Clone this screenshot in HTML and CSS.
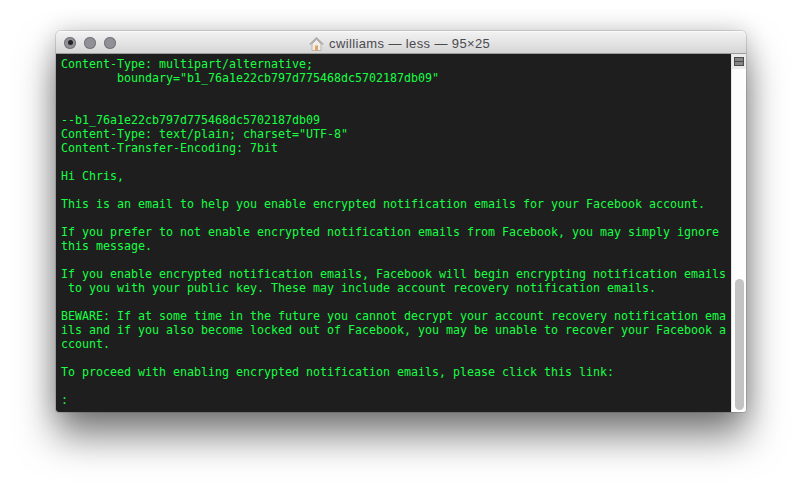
FILE: index.html
```html
<!DOCTYPE html>
<html lang="en">
<head>
<meta charset="utf-8">
<title>cwilliams — less — 95×25</title>
<link rel="stylesheet" href="styles.css">
</head>
<body>
<main class="window">
  <header class="titlebar">
    <div class="lights">
      <span class="light"><span class="dot"></span></span>
      <span class="light"></span>
      <span class="light"></span>
    </div>
    <div class="title">
      <svg class="home" width="15" height="14" viewBox="0 0 15 14">
        <path d="M3 7v6.500h9V7L7.500 2.500z" fill="#f1eeea" stroke="#b9b5b0" stroke-width="1"/>
        <path d="M.8 7.500 7.500 1l6.700 6.500" fill="none" stroke="#a8a5a2" stroke-width="1.300"/>
        <rect x="6" y="8.500" width="3" height="5" fill="#e0a468"/>
      </svg>
      <span>cwilliams — less — 95×25</span>
    </div>
  </header>
  <div class="body">
    <pre class="term">Content-Type: multipart/alternative;
        boundary="b1_76a1e22cb797d775468dc5702187db09"


--b1_76a1e22cb797d775468dc5702187db09
Content-Type: text/plain; charset="UTF-8"
Content-Transfer-Encoding: 7bit

Hi Chris,

This is an email to help you enable encrypted notification emails for your Facebook account.

If you prefer to not enable encrypted notification emails from Facebook, you may simply ignore
this message.

If you enable encrypted notification emails, Facebook will begin encrypting notification emails
 to you with your public key. These may include account recovery notification emails.

BEWARE: If at some time in the future you cannot decrypt your account recovery notification ema
ils and if you also become locked out of Facebook, you may be unable to recover your Facebook a
ccount.

To proceed with enabling encrypted notification emails, please click this link:

:</pre>
    <aside class="scrollbar">
      <div class="split"><span class="split-icon"></span></div>
      <div class="track"><div class="thumb"></div></div>
    </aside>
  </div>
</main>
</body>
</html>
```
FILE: styles.css
```css
html, body {
  margin: 0;
  height: 492px;
  overflow: hidden;
  background: #fff;
}
body {
  padding: 31px 56px 0;
  box-sizing: border-box;
}
.window {
  width: 690px;
  height: 381px;
  display: flex;
  flex-direction: column;
  border-radius: 5px 5px 3px 3px;
  overflow: hidden;
  box-shadow: 0 0 0 1px rgba(0,0,0,.12), 0 24px 38px rgba(0,0,0,.5), 0 0 24px rgba(0,0,0,.18);
}
.titlebar {
  height: 23px;
  flex: none;
  display: flex;
  align-items: center;
  position: relative;
  background: linear-gradient(#f2f2f2, #d6d6d6);
  border-top: 1px solid #fafafa;
  box-sizing: border-box;
  border-bottom: 1px solid #9c9c9c;
}
.lights {
  display: flex;
  gap: 8px;
  padding-left: 8px;
}
.light {
  width: 12px;
  height: 12px;
  border-radius: 50%;
  background: #919096;
  box-shadow: inset 0 0 0 1px #77767b;
  display: flex;
  align-items: center;
  justify-content: center;
}
.dot {
  width: 5px;
  height: 5px;
  border-radius: 50%;
  background: #232325;
}
.title {
  position: absolute;
  left: 253px;
  top: 3px;
  display: flex;
  align-items: center;
  gap: 5px;
  font: 13px/17px "Liberation Sans", sans-serif;
  letter-spacing: .38px;
  color: #4a4a50;
  white-space: nowrap;
}
.body {
  flex: 1;
  display: flex;
  min-height: 0;
}
.term {
  flex: 1;
  margin: 0;
  padding: 3px 0 0 5px;
  background: #1e1e1e;
  color: #18ff44;
  font: 11.63px/14px "DejaVu Sans Mono", monospace;
  overflow: hidden;
}
.scrollbar {
  width: 15px;
  flex: none;
  display: flex;
  flex-direction: column;
  background: #fdfdfd;
  border-left: 1px solid #e4e4e4;
  box-sizing: border-box;
}
.split {
  height: 15px;
  flex: none;
  display: flex;
  align-items: center;
  justify-content: center;
  background: #ececec;
}
.split-icon {
  width: 10px;
  height: 9px;
  box-sizing: border-box;
  border: 1px solid #4c4c4c;
  background: linear-gradient(#868686 0 3px, #4c4c4c 3px 4px, #868686 4px);
}
.track {
  flex: 1;
  display: flex;
  flex-direction: column;
  justify-content: flex-end;
  padding: 0 2px 2px 3px;
}
.thumb {
  height: 131px;
  border-radius: 5px;
  background: #c3c3c3;
}
```
